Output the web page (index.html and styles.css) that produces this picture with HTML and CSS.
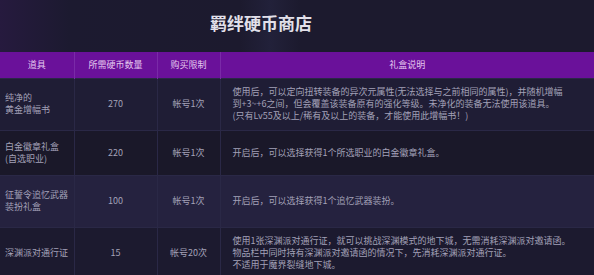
FILE: index.html
```html
<!DOCTYPE html>
<html lang="zh-CN">
<head>
<meta charset="utf-8">
<link rel="stylesheet" href="styles.css">
</head>
<body>
<div class="page">
  <div class="banner">
    <h1 class="title">羁绊硬币商店</h1>
  </div>
  <table class="shop">
    <colgroup>
      <col class="c1"><col class="c2"><col class="c3"><col class="c4">
    </colgroup>
    <thead>
      <tr class="head">
        <th>道具</th><th>所需硬币数量</th><th>购买限制</th><th>礼盒说明</th>
      </tr>
    </thead>
    <tbody>
      <tr class="row tall r1">
        <td class="name">纯净的<br>黄金增幅书</td>
        <td class="num">270</td>
        <td class="num">帐号1次</td>
        <td class="desc">使用后，可以定向扭转装备的异次元属性(无法选择与之前相同的属性)，并随机增幅<br>到+3~+6之间，但会覆盖该装备原有的强化等级。未净化的装备无法使用该道具。<br>(只有Lv55及以上/稀有及以上的装备，才能使用此增幅书！)</td>
      </tr>
      <tr class="row short r2">
        <td class="name">白金徽章礼盒<br>(自选职业)</td>
        <td class="num">220</td>
        <td class="num">帐号1次</td>
        <td class="desc">开启后，可以选择获得1个所选职业的白金徽章礼盒。</td>
      </tr>
      <tr class="row tall r3">
        <td class="name">征誓令追忆武器<br>装扮礼盒</td>
        <td class="num">100</td>
        <td class="num">帐号1次</td>
        <td class="desc">开启后，可以选择获得1个追忆武器装扮。</td>
      </tr>
      <tr class="row tall r4">
        <td class="name">深渊派对通行证</td>
        <td class="num">15</td>
        <td class="num">帐号20次</td>
        <td class="desc">使用1张深渊派对通行证，就可以挑战深渊模式的地下城，无需消耗深渊派对邀请函。<br>物品栏中同时持有深渊派对邀请函的情况下，先消耗深渊派对通行证。<br>不适用于魔界裂缝地下城。</td>
      </tr>
    </tbody>
  </table>
</div>
</body>
</html>
```
FILE: styles.css
```css
html, body {
  margin: 0;
  padding: 0;
  background: #1c1a2e;
  overflow: hidden;
}
.page {
  width: 594px;
  height: 275px;
  overflow: hidden;
  font-family: "Noto Sans CJK SC", "Noto Sans", sans-serif;
}
.banner {
  height: 52px;
  display: flex;
  align-items: center;
  padding-left: 210px;
  background: linear-gradient(90deg, #261a3e 0px, #1c1a30 70px, #1c1a2e 240px, #22213a 270px, #1c1a2e 300px, #1c1a2e 594px);
}
.title {
  margin: 0;
  font-size: 17px;
  font-weight: bold;
  color: #e2e0ea;
  line-height: 20px;
  margin-top: -6px;
}
.shop {
  width: 594px;
  border-collapse: collapse;
  table-layout: fixed;
  font-size: 9px;
  color: #a3a1b8;
}
.c1 { width: 74px; }
.c2 { width: 83px; }
.c3 { width: 63px; }
.c4 { width: 374px; }
.head {
  height: 26px;
  background: #6a119a;
}
.head th {
  font-weight: normal;
  color: #e6c8ef;
  border-left: 1px solid #7a2aa8;
  padding: 0;
  text-align: center;
  vertical-align: middle;
}
.head th:first-child { border-left: none; }
.row td {
  border-left: 1px solid #2a2846;
  border-top: 1px solid #2a2846;
  padding: 0;
  vertical-align: middle;
  line-height: 12px;
}
.row td:first-child { border-left: none; }
.tall { height: 52px; }
.short { height: 45px; }
.r1 { background: #1f1d35; }
.r2 { background: #1a1829; }
.r3 { background: #25223f; }
.r4 { background: #1c1a2f; }
.name {
  padding-left: 5px !important;
  text-align: left;
}
.num { text-align: center; }
.desc {
  padding-left: 12px !important;
  white-space: nowrap;
  text-align: left;
}
```
